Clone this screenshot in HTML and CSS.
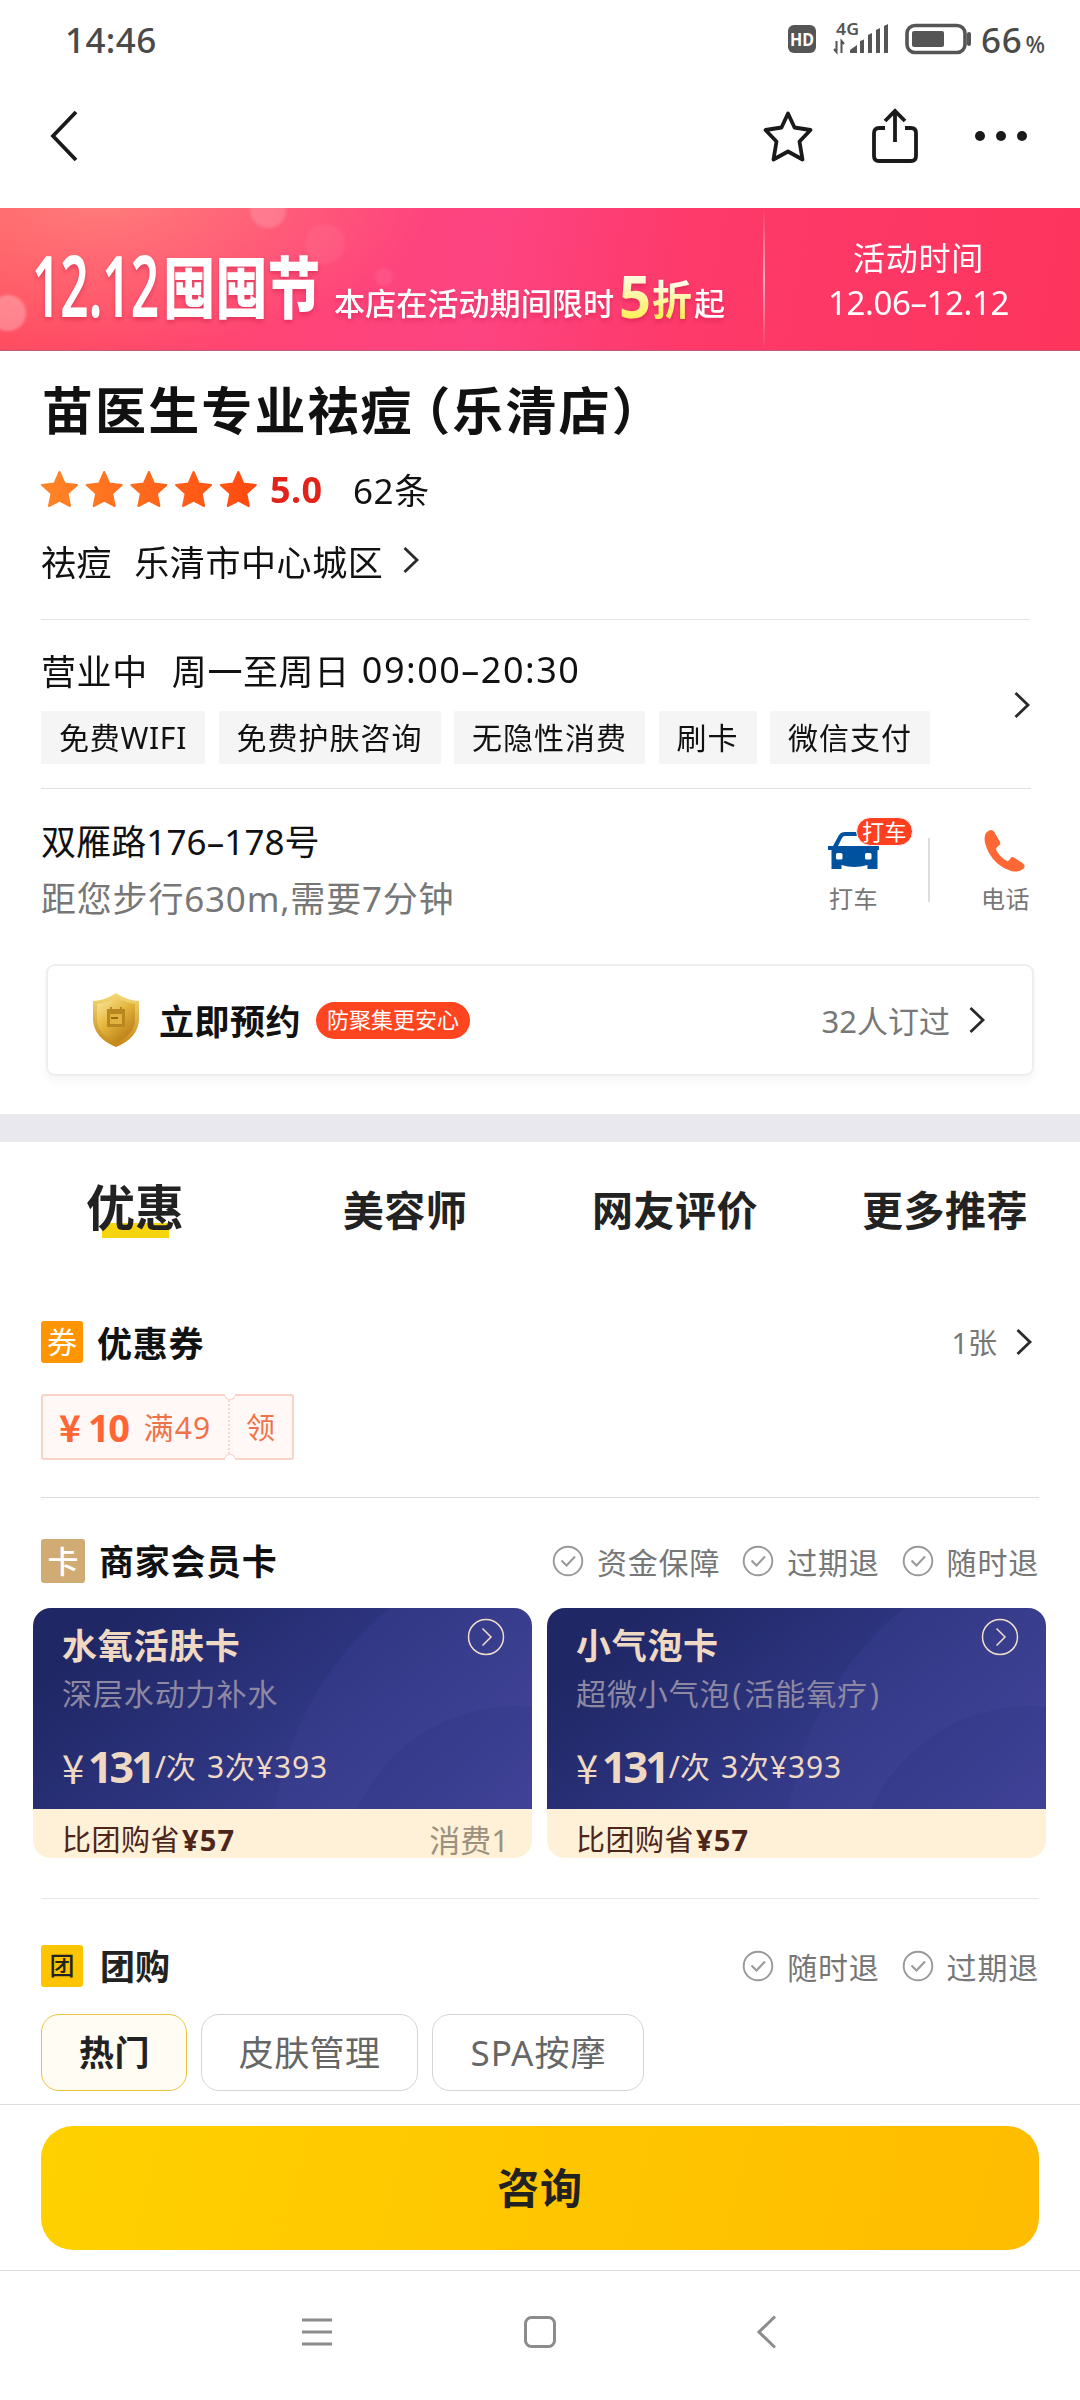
FILE: index.html
```html
<!DOCTYPE html>
<html lang="zh-CN">
<head>
<meta charset="utf-8">
<title>苗医生专业祛痘（乐清店）</title>
<link rel="stylesheet" href="styles.css">
</head>
<body>
<svg class="defs" width="0" height="0" aria-hidden="true">
  <defs>
    <linearGradient id="stars" gradientUnits="userSpaceOnUse" x1="0" y1="0" x2="215" y2="0"><stop offset="0" stop-color="#ff8527"/><stop offset="1" stop-color="#ff4a10"/></linearGradient>
    <linearGradient id="gold" x1="0" y1="0" x2="0.7" y2="1"><stop offset="0" stop-color="#fce9a4"/><stop offset=".5" stop-color="#e5b73c"/><stop offset="1" stop-color="#b97c17"/></linearGradient>
    <linearGradient id="goldrim" x1="0" y1="0" x2="0" y2="1"><stop offset="0" stop-color="#f4da76"/><stop offset="1" stop-color="#c58616"/></linearGradient>
    <linearGradient id="goldtext" x1="0" y1="0" x2="0" y2="1"><stop offset=".2" stop-color="#fffdf0"/><stop offset=".8" stop-color="#fff05a"/></linearGradient>
    <linearGradient id="card" x1="0" y1=".4" x2="1" y2=".9"><stop offset="0" stop-color="#1f2765"/><stop offset=".45" stop-color="#2e3580"/><stop offset="1" stop-color="#44459a"/></linearGradient>
    <linearGradient id="glow" x1="0" y1="0" x2=".7" y2="1"><stop offset="0" stop-color="#4548a0" stop-opacity=".2"/><stop offset="1" stop-color="#4548a0" stop-opacity="0.100"/></linearGradient>
    <linearGradient id="disc" x1="0" y1="0" x2=".55" y2=".6"><stop offset="0" stop-color="#2f3681" stop-opacity=".75"/><stop offset="1" stop-color="#40429a" stop-opacity=".5"/></linearGradient>
    <symbol id="chev" viewBox="0 0 18 28"><path d="M2.500 2 15 14 2.500 26" fill="none" stroke="#2a2a2a" stroke-width="2.800"/></symbol>
    <symbol id="check" viewBox="0 0 32 32"><circle cx="16" cy="16" r="14.300" fill="none" stroke="#999" stroke-width="1.900"/><path d="M9.500 15.500 14.500 20.500 23 11.500" fill="none" stroke="#999" stroke-width="2"/></symbol>
    <symbol id="cardbg" viewBox="0 0 499 201"><rect width="499" height="201" fill="url(#card)"/><circle cx="560" cy="250" r="322" fill="url(#glow)"/><circle cx="483" cy="272" r="174" fill="url(#disc)"/></symbol>
    <symbol id="go" viewBox="0 0 40 40"><circle cx="20" cy="20" r="17.500" fill="none" stroke="#f0dccb" stroke-width="1.500"/><path d="M16.500 11.500 25 20 16.500 28.500" fill="none" stroke="#f0dccb" stroke-width="1.500"/></symbol>
  </defs>
</svg>
<div class="screen">
  <header class="status">
    <span class="time">14:46</span>
    <svg class="status-icons" width="190" height="40" viewBox="0 0 190 40">
      <rect x="3" y="5" width="28" height="28" rx="6" fill="#555"/>
      <text x="5" y="25.500" class="hd" textLength="24" lengthAdjust="spacingAndGlyphs">HD</text>
      <text x="51" y="15" class="net" textLength="23" lengthAdjust="spacingAndGlyphs">4G</text>
      <path d="M51.500 21v11l-2.500-3M56.500 33V21l2.500 3" stroke="#555" stroke-width="2" fill="none"/>
      <path d="M65 33v-3l7-5v8zM75 21l4-1.500V33h-4zM83 15l4-2v20h-4zM91 10l4-2v25h-4zM99 6l4-2v29h-4z" fill="#555"/>
      <rect x="122" y="5.500" width="58" height="27" rx="8" fill="none" stroke="#555" stroke-width="3.600"/>
      <rect x="127" y="11" width="32" height="16" rx="2" fill="#555"/>
      <path d="M184 14v10" stroke="#555" stroke-width="4" stroke-linecap="round"/>
    </svg>
    <span class="batt">66<small>%</small></span>
  </header>
  <nav class="topbar">
    <svg width="34" height="56" viewBox="0 0 34 56"><path d="M31 4 8 28 31 52" fill="none" stroke="#1a1a1a" stroke-width="3.800"/></svg>
    <div class="actions">
      <svg width="56" height="56" viewBox="0 0 56 56"><path d="M28 5.500 34.500 19.500 50.500 22 39.500 33.500 42.500 51.500 28 43.500 13.500 51.500 16.500 33.500 5.500 22 21.500 19.500Z" fill="none" stroke="#1a1a1a" stroke-width="3.800" stroke-linejoin="round"/></svg>
      <svg width="48" height="56" viewBox="0 0 48 56"><path d="M14 20H8q-5 0-5 5v23q0 5 5 5h32q5 0 5-5V25q0-5-5-5h-6M24 34V3M14 13 24 3l10 10" fill="none" stroke="#1a1a1a" stroke-width="3.800"/></svg>
      <svg width="54" height="12" viewBox="0 0 54 12"><g fill="#1a1a1a"><circle cx="6" cy="6" r="5"/><circle cx="27" cy="6" r="5"/><circle cx="48" cy="6" r="5"/></g></svg>
    </div>
  </nav>

  <section class="banner">
    <svg class="promo" width="763" height="143" viewBox="0 0 763 143">
      <g class="bokeh"><circle cx="8" cy="105" r="18" opacity=".28"/><circle cx="268" cy="2" r="18" opacity=".17"/><circle cx="325" cy="36" r="20" opacity=".06"/><circle cx="384" cy="69" r="9" opacity=".08"/></g>
      <g class="promo-text">
        <text x="32" y="109" font-size="84" font-weight="600" textLength="127" lengthAdjust="spacingAndGlyphs">12.12</text>
        <text x="163" y="105" font-size="67" font-weight="900" textLength="157" lengthAdjust="spacingAndGlyphs">囤囤节</text>
        <text x="334" y="107" font-size="31" font-weight="500" textLength="280" lengthAdjust="spacingAndGlyphs">本店在活动期间限时</text>
        <text x="619" y="110" font-size="59" font-weight="700" fill="url(#goldtext)" textLength="32" lengthAdjust="spacingAndGlyphs">5</text>
        <text x="652" y="107" font-size="41" font-weight="700" fill="url(#goldtext)" textLength="40" lengthAdjust="spacingAndGlyphs">折</text>
        <text x="694" y="107" font-size="31" font-weight="500">起</text>
      </g>
    </svg>
    <i class="banner-line"></i>
    <div class="period"><span>活动时间</span><span class="dates">12.06–12.12</span></div>
  </section>

  <section class="shop">
    <h1>苗医生专业祛痘<span class="paren">（</span>乐清店<span>）</span></h1>
    <div class="rating">
      <svg width="216" height="38" viewBox="0 0 216 38"><path fill="url(#stars)" stroke="url(#stars)" stroke-width="2" stroke-linejoin="round" d="M18.500 2l5 11.500 12.500 1.500-9.500 8.500 2.500 12.500-10.500-5.500-10.500 5.500 2.500-12.500L1 15l12.500-1.500zM63.200 2l5 11.500 12.500 1.500-9.500 8.500 2.500 12.500-10.500-5.500-10.500 5.500 2.500-12.500-9.500-8.500 12.500-1.500zM107.900 2l5 11.500 12.500 1.500-9.500 8.500 2.500 12.500-10.500-5.500-10.500 5.500 2.500-12.500-9.500-8.500 12.500-1.500zM152.600 2l5 11.500 12.500 1.500-9.500 8.500 2.500 12.500-10.500-5.500-10.500 5.500 2.500-12.500-9.500-8.500 12.500-1.500zM197.300 2l5 11.500 12.500 1.500-9.500 8.500 2.500 12.500-10.500-5.500-10.500 5.500 2.500-12.500-9.500-8.500 12.500-1.500z"/></svg>
      <b>5.0</b><span class="t35">62条</span>
    </div>
    <div class="area t35"><span>祛痘</span><span>乐清市中心城区</span><svg width="18" height="28"><use href="#chev"/></svg></div>
  </section>

  <section class="hours">
    <div>
      <div class="open t35"><span>营业中</span><span>周一至周日</span><span class="clock">09:00–20:30</span></div>
      <ul class="tags"><li>免费WIFI</li><li>免费护肤咨询</li><li>无隐性消费</li><li>刷卡</li><li>微信支付</li></ul>
    </div>
    <svg class="hours-chev" width="18" height="28"><use href="#chev"/></svg>
  </section>

  <section class="address">
    <div class="where t35"><span class="street">双雁路176–178号</span><span class="walk">距您步行630m,需要7分钟</span></div>
    <div class="act taxi">
      <svg width="52" height="38" viewBox="0 0 52 38"><path d="M5 14 11 3Q13 0 17 0H33Q38 0 41 4L46 14H51V18H49.500V37H39.500V33Q26 37 13.500 33V37H3.500V18H0V14ZM10 14H41L35 4H17Q15 4 14 6Z" fill="#00529f" fill-rule="evenodd"/><rect x="8" y="21" width="6.500" height="6.500" rx="1.500" fill="#fff"/><rect x="37" y="21" width="6.500" height="6.500" rx="1.500" fill="#fff"/></svg>
      <span>打车</span><em>打车</em>
    </div>
    <div class="act phone">
      <svg width="42" height="44" viewBox="0 0 42 44"><path d="M5 1.500 Q8 0 10 2.500L16 13Q17 15 15 16.500 10.500 19 13 22.500 17 29 23 32 25 32.500 26 30 27.500 27 30 28.500L39 34.500Q42 37 39.500 39.500 35 44 27 42 12 37 5 24-2 10 2 4Q3.500 2 5 1.500Z" fill="#ff6834"/></svg>
      <span>电话</span>
    </div>
  </section>

  <section class="booking">
    <svg width="46" height="54" viewBox="0 0 46 54"><path d="M23 0Q33 7 46 8V27Q45 45 23 54 1 45 0 27V8Q13 7 23 0Z" fill="url(#goldrim)"/><path d="M23 4Q32 10 42 11V27Q41 42 23 50 5 42 4 27V11Q14 10 23 4Z" fill="url(#gold)"/><path d="M14 16h3v-2h2v2h8v-2h2v2h3v18H14z" fill="#b98722"/><path d="M17 21h12v10H17z" fill="#e2b23e"/><path d="M18 25h7" stroke="#8c6010" stroke-width="1.800"/></svg>
    <b>立即预约</b><span class="pill">防聚集更安心</span>
    <span class="booked">32人订过</span><svg width="18" height="28"><use href="#chev"/></svg>
  </section>

  <nav class="tabs"><span class="on">优惠</span><span>美容师</span><span>网友评价</span><span>更多推荐</span></nav>

  <section class="coupon">
    <div class="head"><i class="ico quan">券</i><h2>优惠券</h2><span class="count">1张</span><svg width="18" height="28"><use href="#chev"/></svg></div>
    <div class="ticket"><div class="amt"><b class="yen">¥</b><b>10</b><span>满49</span></div><div class="get">领</div></div>
  </section>

  <section class="member">
    <div class="head"><i class="ico ka">卡</i><h2>商家会员卡</h2>
      <div class="promises"><span><svg width="32" height="32"><use href="#check"/></svg>资金保障</span><span><svg width="32" height="32"><use href="#check"/></svg>过期退</span><span><svg width="32" height="32"><use href="#check"/></svg>随时退</span></div>
    </div>
    <div class="cards">
      <article>
        <svg class="cardbg" width="499" height="201"><use href="#cardbg"/></svg>
        <div class="face"><h3>水氧活肤卡</h3><p class="sub">深层水动力补水</p><p class="price"><span class="y">¥</span><b>131</b><span>/次</span><span class="total">3次¥393</span></p></div>
        <svg class="go" width="40" height="40"><use href="#go"/></svg>
        <footer><span>比团购省<b>¥57</b></span><span class="spend">消费1</span></footer>
      </article>
      <article>
        <svg class="cardbg" width="499" height="201"><use href="#cardbg"/></svg>
        <div class="face"><h3>小气泡卡</h3><p class="sub">超微小气泡<span>(</span>活能氧疗<span>)</span></p><p class="price"><span class="y">¥</span><b>131</b><span>/次</span><span class="total">3次¥393</span></p></div>
        <svg class="go" width="40" height="40"><use href="#go"/></svg>
        <footer><span>比团购省<b>¥57</b></span></footer>
      </article>
    </div>
  </section>

  <section class="group">
    <div class="head"><i class="ico tuan">团</i><h2>团购</h2>
      <div class="promises"><span><svg width="32" height="32"><use href="#check"/></svg>随时退</span><span><svg width="32" height="32"><use href="#check"/></svg>过期退</span></div>
    </div>
    <div class="filters"><span class="sel">热门</span><span>皮肤管理</span><span class="spa">SPA按摩</span></div>
  </section>

  <div class="cta"><button>咨询</button></div>

  <footer class="sysnav">
    <svg width="30" height="34" viewBox="0 0 30 34"><path d="M0 5h30M0 17h30M0 29h30" stroke="#8c8c8c" stroke-width="3"/></svg>
    <svg width="34" height="34" viewBox="0 0 34 34"><rect x="2.500" y="2.500" width="29" height="29" rx="6" fill="none" stroke="#8c8c8c" stroke-width="3"/></svg>
    <svg width="22" height="34" viewBox="0 0 22 34"><path d="M19 1.500 3 17 19 32.500" fill="none" stroke="#8c8c8c" stroke-width="3"/></svg>
  </footer>
</div>
</body>
</html>
```
FILE: styles.css
```css
* { box-sizing: border-box; margin: 0; padding: 0; }
body { background: #fff; color: #111; font-family: "Noto Sans", "Noto Sans CJK SC", sans-serif; }
.screen { width: 1080px; height: 2400px; overflow: hidden; display: flex; flex-direction: column; }
.screen > * { flex: none; }
.defs { position: absolute; }
svg { display: block; flex: none; }
span, b, h1, h2, h3, li { white-space: nowrap; }
.t35 { font-size: 35px; letter-spacing: .6px; }

.status { height: 80px; padding: 0 33px 2px 65px; display: flex; align-items: center; color: #4a4a4a; }
.time { font-size: 35px; font-weight: 500; letter-spacing: .4px; }
.status-icons { margin: 2px 0 0 auto; overflow: visible; }
.hd { font-size: 17px; font-weight: 700; fill: #fff; }
.net { font-size: 16px; font-weight: 600; fill: #555; }
.batt { width: 66px; margin-left: 6px; font-size: 35px; font-weight: 500; letter-spacing: .7px; }
.batt small { font-size: 23px; margin-left: 3px; }

.topbar { height: 128px; padding: 0 52px 17px 45px; display: flex; align-items: center; justify-content: space-between; }
.actions { display: flex; align-items: center; }
.actions svg:nth-child(2) { margin-left: 55px; }
.actions svg:nth-child(3) { margin-left: 55px; }

.banner { height: 143px; display: flex; color: #fff; border-bottom: 1px solid #c05a7c;
  background: radial-gradient(ellipse 330px 150px at 100px -10px, rgba(255,140,130,.75), rgba(255,130,130,0)), linear-gradient(100deg, #ff4f5e 0%, #ff4477 28%, #fd4482 45%, #fd3a6b 62%, #fd355d 100%); }
.bokeh { fill: #fff; filter: blur(1.5px); }
.promo-text { fill: #fff; filter: drop-shadow(0 3px 2px rgba(190,20,60,.4)); }
.banner-line { width: 2px; background: linear-gradient(rgba(255,255,255,0), rgba(255,255,255,.6), rgba(255,255,255,0)); }
.period { width: 307px; padding-top: 28px; display: flex; flex-direction: column; align-items: center; font-size: 32px; line-height: 44px; letter-spacing: .8px; }
.period .dates { font-size: 33px; letter-spacing: -.4px; line-height: 45px; }

.shop { height: 269px; margin: 0 50px 0 41px; border-bottom: 1px solid #e3e3e3; }
h1 { height: 118px; line-height: 118px; padding-left: 1px; font-size: 51px; letter-spacing: 2.1px; font-weight: 700; }
.paren { margin-left: 11px; font-feature-settings: "halt"; }
.rating { height: 40px; display: flex; align-items: center; }
.rating b { width: 83px; margin-left: 13px; font-size: 36px; letter-spacing: .4px; color: #e2231a; }
.rating span { margin-top: -2px; }
.area { height: 105px; display: flex; align-items: center; padding-bottom: 3px; }
.area span { margin-right: 22px; }
.area svg { margin: 0 0 1px -3px; }

.hours { height: 169px; margin: 0 49px 0 41px; border-bottom: 1px solid #e0e0e0; display: flex; justify-content: space-between; }
.open { height: 91px; padding-top: 7px; display: flex; align-items: center; }
.open span:nth-child(2) { margin-left: 24px; }
.open .clock { margin-left: 12px; letter-spacing: 1.5px; font-size: 36px; }
.tags { display: flex; gap: 13.500px; list-style: none; }
.tags li { height: 53px; line-height: 53px; padding: 0 18px; background: #f5f5f5; font-size: 30px; letter-spacing: 1px; }
.tags li:first-child { letter-spacing: .7px; }
.hours-chev { margin-top: 71px; }

.address { height: 175px; margin: 0 50px 0 41px; display: flex; color: #777; }
.where { display: flex; flex-direction: column; flex: 1; padding-top: 24px; line-height: 57px; }
.street { color: #111; letter-spacing: .1px; }
.walk { letter-spacing: .8px; }
.act { display: flex; flex-direction: column; font-size: 24px; letter-spacing: .5px; position: relative; }
.act span { line-height: 34px; }
.taxi { width: 100px; padding-top: 43px; }
.taxi span { margin: 12px 0 0 1px; }
.taxi em { position: absolute; left: 28px; top: 28px; width: 57px; height: 29px; border: 1px solid #fff; border-radius: 15px; background: #ff4020; color: #fff; font-style: normal; font-size: 22px; line-height: 26px; text-align: center; }
.phone { padding: 40px 0 0 53px; }
.phone::before { content: ""; position: absolute; left: 0; top: 49px; width: 2px; height: 64px; background: #ddd; }
.phone svg { margin-left: 3px; }
.phone span { margin-top: 9px; }

.booking { height: 112px; margin: 0 46px 38px 46px; padding: 0 46px 0 45px; border: 2px solid #eee; border-radius: 9px; box-shadow: 0 6px 8px rgba(0,0,0,.04); display: flex; align-items: center; }
.booking b { margin: -2px 0 0 20px; font-size: 35px; letter-spacing: .5px; }
.pill { margin-left: 15px; width: 154px; height: 37px; line-height: 35px; border-radius: 19px; background: #ff4420; color: #fff; font-size: 22px; text-align: center; }
.booked { margin: -2px 18px 0 auto; color: #777; font-size: 31px; }

.tabs { border-top: 28px solid #e9e8ef; height: 162px; display: grid; grid-template-columns: repeat(4, 270px); justify-items: center; color: #222; font-size: 41px; letter-spacing: .5px; font-weight: 700; line-height: 137px; }
.tabs .on { font-size: 49px; letter-spacing: 0; line-height: 131px; position: relative; z-index: 0; }
.tabs .on::before { content: ""; position: absolute; z-index: -1; left: 16px; top: 81px; width: 67px; height: 15px; background: #f6d40f; }

.head { display: flex; align-items: center; }
h2 { margin-top: -2px; font-size: 35px; letter-spacing: .7px; font-weight: 700; }
.ico { width: 42px; height: 42px; border-radius: 3px; font-style: normal; text-align: center; color: #fff; font-size: 30px; line-height: 41px; margin-right: 14px; }
.quan { background: #ff9500; }
.ka { width: 44px; height: 44px; line-height: 44px; background: #d0ab74; font-size: 31px; font-weight: 500; }
.tuan { background: #ffc400; color: #222; font-size: 25px; font-weight: 500; line-height: 40px; margin-right: 17px; }

.coupon { height: 222px; margin: 0 41px; border-bottom: 1px solid #dedede; }
.coupon .head { height: 118px; padding: 14px 6px 0 0; }
.count { margin: -2px 18px 0 auto; font-size: 29px; color: #777; }
.ticket { width: 253px; height: 66px; border: 2px solid #f8d3c8; border-radius: 3px; background: #fff8f7; display: flex; color: #ed744a; font-size: 28px; line-height: 63px; position: relative; }
.amt { width: 187px; padding-left: 16px; display: flex; border-right: 2px dotted #f6d5ca; }
.amt b { color: #ff6633; font-size: 38px; line-height: 62px; letter-spacing: -1.5px; }
.amt .yen { font-size: 37px; width: 29px; font-family: "Noto Sans CJK SC", sans-serif; line-height: 60px; }
.amt span { margin-left: 15px; font-size: 30px; letter-spacing: 1.2px; }
.get { margin-left: 5px; padding-left: 10px; border-left: 1px solid #fff; font-size: 29px; }
.ticket::before, .ticket::after { content: ""; position: absolute; left: 181px; width: 10px; height: 5px; background: #fff; border: 1px solid #f8d3c8; }
.ticket::before { top: -2px; border-top: 0; border-radius: 0 0 6px 6px; }
.ticket::after { bottom: -2px; border-bottom: 0; border-radius: 6px 6px 0 0; }

.member { height: 400px; padding: 0 33px; }
.member .head { height: 110px; padding: 15px 8px 0; }
.promises { margin-left: auto; display: flex; gap: 22px; color: #777; font-size: 30px; letter-spacing: .8px; }
.promises span { display: flex; align-items: center; gap: 13px; }
.cards { display: flex; gap: 15px; }
article { width: 499px; height: 250px; border-radius: 18px; overflow: hidden; position: relative; background: #fff0d8; }
.cardbg, .go { position: absolute; left: 0; top: 0; }
.go { left: 433px; top: 9px; }
.face { position: relative; height: 201px; padding-left: 29px; color: #efd9c3; }
h3 { font-size: 35px; letter-spacing: .7px; line-height: 50px; padding-top: 13px; }
.sub { font-size: 30px; letter-spacing: .9px; line-height: 46px; color: #8e88a2; }
.sub span { margin: 0 2px; }
.price { margin-top: 20px; line-height: 60px; display: flex; align-items: center; font-size: 30px; }
.price .y { font-size: 40px; width: 26px; font-family: "Noto Sans CJK SC", sans-serif; font-weight: 400; }
.price b { font-size: 43px; letter-spacing: -3px; margin-right: 2px; }
.total { margin-left: 11px; letter-spacing: .9px; }
article footer { position: relative; height: 49px; padding: 13px 23px 0 29px; display: flex; justify-content: space-between; font-size: 29px; letter-spacing: .5px; line-height: 36px; color: #4c261b; }
article footer b { margin-left: 2px; letter-spacing: 1.2px; }
.spend { color: #9c917e; font-size: 31px; letter-spacing: 0; }

.group { height: 207px; border-bottom: 1px solid #ddd; padding: 0 41px; }
.group::before { content: ""; display: block; border-top: 1px solid #e6e6e6; }
.group .head { height: 107px; padding-top: 26px; }
.group .head h2 { color: #222; letter-spacing: 0; }
.filters { margin-top: 8px; display: flex; gap: 14px; }
.filters span { height: 77px; line-height: 76px; border: 1px solid #d4d4d4; border-radius: 18px; padding: 0 37px; font-size: 35px; letter-spacing: .4px; color: #666; }
.filters .sel { border-color: #e8c43c; background: #fffdf3; color: #222; font-weight: 700; padding: 0 36px 0 37px; }
.filters .spa { letter-spacing: 1px; }

.cta { height: 166px; padding: 21px 41px 0; border-bottom: 1px solid #ddd; }
button { display: block; width: 998px; height: 124px; border: 0; border-radius: 32px; background: linear-gradient(105deg, #ffd100, #ffbc00); font: 700 42px/124px "Noto Sans", "Noto Sans CJK SC", sans-serif; color: #222; letter-spacing: .8px; }
.sysnav { height: 129px; padding: 0 302px 7px; display: flex; align-items: center; justify-content: space-between; }
.sysnav svg:nth-child(2) { margin-right: 8px; }
```
